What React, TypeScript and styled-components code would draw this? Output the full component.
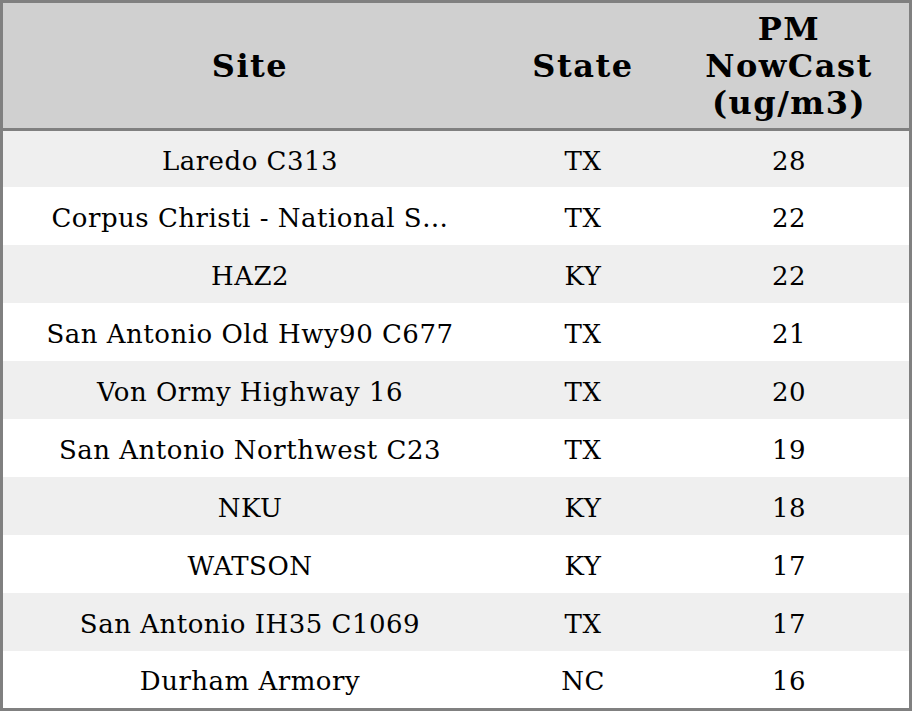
import styled, { createGlobalStyle } from "styled-components";

interface Site {
    name: string;
    state: string;
    pm: number;
}

const sites: Site[] = [
    { name: "Laredo C313", state: "TX", pm: 28 },
    { name: "Corpus Christi - National S…", state: "TX", pm: 22 },
    { name: "HAZ2", state: "KY", pm: 22 },
    { name: "San Antonio Old Hwy90 C677", state: "TX", pm: 21 },
    { name: "Von Ormy Highway 16", state: "TX", pm: 20 },
    { name: "San Antonio Northwest C23", state: "TX", pm: 19 },
    { name: "NKU", state: "KY", pm: 18 },
    { name: "WATSON", state: "KY", pm: 17 },
    { name: "San Antonio IH35 C1069", state: "TX", pm: 17 },
    { name: "Durham Armory", state: "NC", pm: 16 },
];

const GlobalStyle = createGlobalStyle`
    html, body {
        margin: 0;
        padding: 0;
        background: #fff;
    }
`;

const Table = styled.div`
    box-sizing: border-box;
    width: 912px;
    height: 711px;
    border: 3px solid #808080;
    display: grid;
    grid-template-columns: 494px 172px 240px;
    grid-template-rows: 128px 56px repeat(8, 58px) 57px;
    font-family: "DejaVu Serif", serif;
    color: #000;
`;

const Row = styled.div<{ striped?: boolean }>`
    display: contents;
    & > div {
        background: ${p => p.striped ? '#efefef' : '#fff'};
    }
`;

const HeadCell = styled.div`
    box-sizing: border-box;
    display: flex;
    align-items: center;
    justify-content: center;
    text-align: center;
    padding-top: 2px;
    background: #d0d0d0;
    border-bottom: 3px solid #808080;
    font-size: 32px;
    font-weight: bold;
    letter-spacing: 1.5px;
    line-height: 37px;
`;

const Cell = styled.div`
    box-sizing: border-box;
    display: flex;
    align-items: center;
    justify-content: center;
    text-align: center;
    padding-top: 3px;
    font-size: 26px;
    letter-spacing: 0.5px;
    white-space: nowrap;
    overflow: hidden;
`;

const App: React.FC = () => {
    return <>
        <GlobalStyle />
        <Table>
            <HeadCell>Site</HeadCell>
            <HeadCell>State</HeadCell>
            <HeadCell>PM<br />NowCast<br />(ug/m3)</HeadCell>
            {sites.map((it, i) => <Row key={i} striped={i % 2 === 0}>
                <Cell>{it.name}</Cell>
                <Cell>{it.state}</Cell>
                <Cell>{it.pm}</Cell>
            </Row>)}
        </Table>
    </>;
};

export default App;
